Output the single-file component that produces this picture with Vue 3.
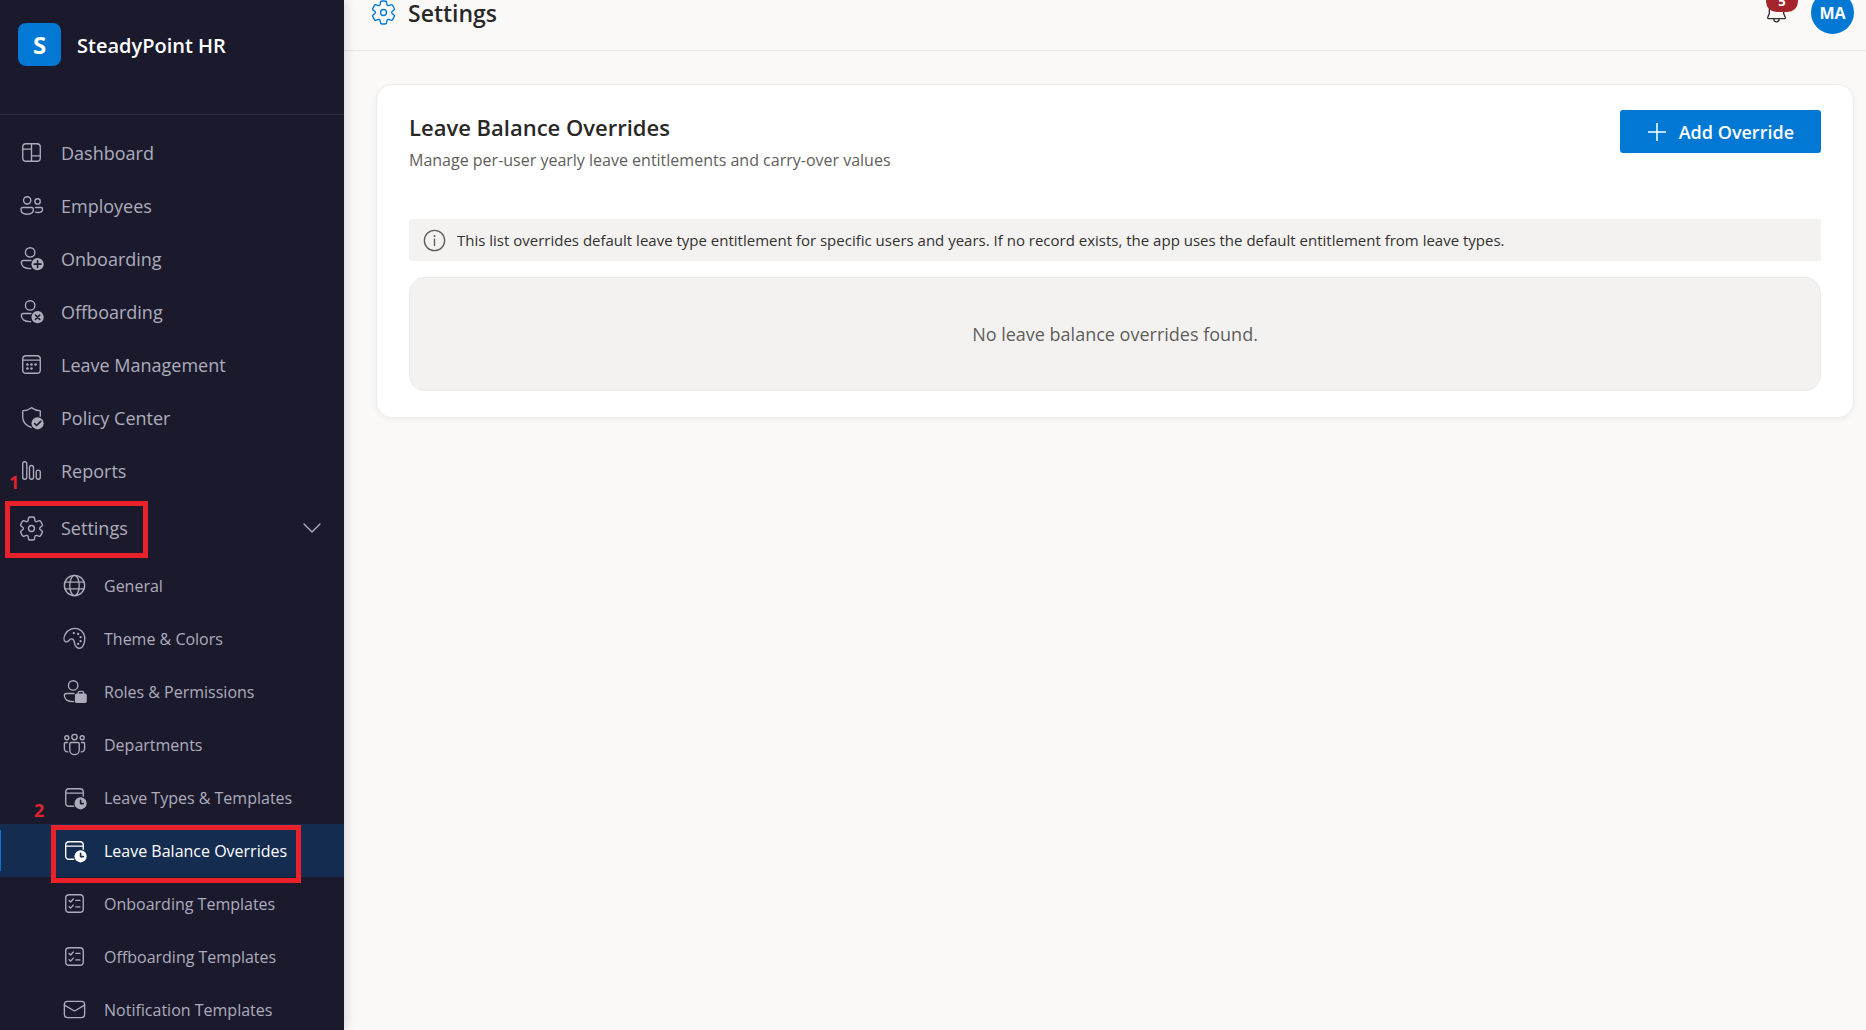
<script setup>
import { ref } from 'vue'

const settingsOpen = ref(true)
const unread = ref(5)
const overrides = ref([])

const mainItems = [
  { label: 'Dashboard', icon: 'board' },
  { label: 'Employees', icon: 'people' },
  { label: 'Onboarding', icon: 'personAdd' },
  { label: 'Offboarding', icon: 'personRemove' },
  { label: 'Leave Management', icon: 'calendar' },
  { label: 'Policy Center', icon: 'shield' },
  { label: 'Reports', icon: 'bars', step: 1 },
]

const settingsItems = [
  { label: 'General', icon: 'globe' },
  { label: 'Theme & Colors', icon: 'palette' },
  { label: 'Roles & Permissions', icon: 'roles' },
  { label: 'Departments', icon: 'team' },
  { label: 'Leave Types & Templates', icon: 'calendarClock', step: 2 },
  { label: 'Leave Balance Overrides', icon: 'calendarClock', active: true },
  { label: 'Onboarding Templates', icon: 'checklist' },
  { label: 'Offboarding Templates', icon: 'checklist' },
  { label: 'Notification Templates', icon: 'mail' },
]

// class "f" = filled shape, class "k" = cut-out drawn in the row colour
const personBody =
  '<circle cx="9" cy="5.5" r="3.5"/><path d="M9.6 11.5H4a1.5 1.5 0 0 0-1.5 1.5c0 2.9 2.4 4.6 6.9 4.5"/>'
const calendarClock =
  '<path d="M9.4 16.5H6A2.5 2.5 0 0 1 3.5 14V6A2.5 2.5 0 0 1 6 3.5h8A2.5 2.5 0 0 1 16.5 6v3M3.5 6.8h13"/>' +
  '<circle class="f" cx="14.5" cy="14.3" r="4.5"/><path class="k" d="M14.5 12v2.5h2"/>'

const icons = {
  board: '<rect x="3.5" y="3.5" width="13" height="13" rx="2.5"/><path d="M10 3.5v13M3.5 7.5H10M10 12.5h6.5"/>',
  people:
    '<circle cx="6.8" cy="6.2" r="2.7"/><circle cx="14.5" cy="7" r="2"/>' +
    '<path d="M3.5 11.5h6.6a1.3 1.3 0 0 1 1.3 1.3c0 2.2-1.8 3.7-4.6 3.7s-4.6-1.5-4.6-3.7a1.3 1.3 0 0 1 1.3-1.3Z"/>' +
    '<path d="M13 11.5h4a1.2 1.2 0 0 1 1.2 1.2c0 1.5-1.4 2.5-3.4 2.5-.7 0-1.4-.1-1.9-.4"/>',
  personAdd: personBody + '<circle class="f" cx="14.5" cy="14.2" r="4.5"/><path class="k" d="M14.5 11.7v5M12 14.2h5"/>',
  personRemove:
    personBody + '<circle class="f" cx="14.5" cy="14.2" r="4.5"/><path class="k" d="m12.9 12.6 3.2 3.2M16.1 12.6l-3.2 3.2"/>',
  calendar:
    '<rect x="3.5" y="3.5" width="13" height="13" rx="2.5"/><path d="M3.5 6.8h13"/>' +
    '<g class="f"><circle cx="7" cy="10" r=".95"/><circle cx="10" cy="10" r=".95"/><circle cx="13" cy="10" r=".95"/>' +
    '<circle cx="7" cy="13" r=".95"/><circle cx="10" cy="13" r=".95"/></g>',
  shield:
    '<path d="M16.5 9V5.4a.5.5 0 0 0-.5-.5c-2 0-3.9-.7-5.7-2a.5.5 0 0 0-.6 0C7.9 4.2 6 4.9 4 4.9a.5.5 0 0 0-.5.5v4.3c0 3.5 2.2 6.1 6.2 7.7"/>' +
    '<circle class="f" cx="14.5" cy="14.3" r="4.5"/><path class="k" d="m12.4 14.5 1.4 1.4 3-3"/>',
  bars:
    '<rect x="3.5" y="3.5" width="3" height="13" rx="1.5"/><rect x="8.5" y="6.3" width="3" height="10.2" rx="1.5"/>' +
    '<rect x="13.5" y="9.7" width="3" height="6.8" rx="1.5"/>',
  gear:
    '<path d="M1.91 7.38A8.5 8.5 0 0 1 3.7 4.3a.5.5 0 0 1 .54-.13l1.92.68a1 1 0 0 0 1.32-.76l.36-2a.5.5 0 0 1 .4-.4 8.53 8.53 0 0 1 3.55 0c.2.04.35.2.38.4l.37 2a1 1 0 0 0 1.32.76l1.92-.68a.5.5 0 0 1 .54.13 8.5 8.5 0 0 1 1.78 3.08c.06.2 0 .4-.15.54l-1.56 1.32a1 1 0 0 0 0 1.52l1.56 1.32a.5.5 0 0 1 .15.54 8.5 8.5 0 0 1-1.78 3.08.5.5 0 0 1-.54.13l-1.92-.68a1 1 0 0 0-1.32.76l-.37 2a.5.5 0 0 1-.38.4 8.53 8.53 0 0 1-3.56 0 .5.5 0 0 1-.39-.4l-.36-2a1 1 0 0 0-1.32-.76l-1.92.68a.5.5 0 0 1-.54-.13 8.5 8.5 0 0 1-1.78-3.08.5.5 0 0 1 .15-.54l1.56-1.32a1 1 0 0 0 0-1.52L2.06 7.92a.5.5 0 0 1-.15-.54Z"/>' +
    '<circle cx="10" cy="10" r="2.2"/>',
  globe: '<circle cx="10" cy="10" r="7.5"/><ellipse cx="10" cy="10" rx="3.5" ry="7.5"/><path d="M3 7.5h14M3 12.5h14"/>',
  palette:
    '<path d="M3.2 12.3C1.7 11.4 2.2 8.6 3.2 6.7 5.2 3.2 9.1 1.7 12.7 2.9c3.7 1.3 5.6 5.1 4.8 9-.7 3.5-2.2 5.6-4.3 5.3-2.3-.3-2.9-1.8-3.2-3.9-.3-2.2-1.1-3.2-2.5-3-1.7.3-2.3 3-4.3 2Z"/>' +
    '<g class="f"><circle cx="9.5" cy="6" r=".85"/><circle cx="12.7" cy="6.6" r=".85"/><circle cx="14.5" cy="9" r=".85"/>' +
    '<circle cx="14.5" cy="12" r=".85"/><circle cx="12.7" cy="14" r=".85"/></g>',
  roles:
    personBody +
    '<rect class="f" x="10.3" y="11.5" width="8.8" height="7" rx="1.3"/><path d="M12.7 11.5v-.6a1 1 0 0 1 1-1h2a1 1 0 0 1 1 1v.6"/>',
  team:
    '<circle cx="10" cy="4.5" r="2"/><circle cx="4.3" cy="5" r="1.5"/><circle cx="15.7" cy="5" r="1.5"/>' +
    '<path d="M7.5 8.5h5a1 1 0 0 1 1 1V14a3.5 3.5 0 0 1-7 0V9.5a1 1 0 0 1 1-1ZM4.8 8.5H3.5a1 1 0 0 0-1 1v3.3a2.7 2.7 0 0 0 2.5 2.7M15.2 8.5h1.3a1 1 0 0 1 1 1v3.3a2.7 2.7 0 0 1-2.5 2.7"/>',
  calendarClock,
  checklist:
    '<rect x="3.5" y="3.5" width="13" height="13" rx="2.5"/><path d="m6 7.8 1.1 1.1 2-2.2M11 7.7h3M6 12.3l1.1 1.1 2-2.2M11 12.5h3"/>',
  mail: '<rect x="2.5" y="4" width="15" height="12" rx="2.3"/><path d="m2.5 6.8 7.5 4.3 7.5-4.3"/>',
  info: '<circle cx="10" cy="10" r="7.5"/><path d="M10 9v4.7"/><circle class="f" cx="10" cy="6.7" r=".7"/>',
  bell:
    '<path d="M10 2.5A5.3 5.3 0 0 0 4.7 7.8v2.9l-1.2 2.9a.6.6 0 0 0 .6.9h11.8a.6.6 0 0 0 .6-.9l-1.2-2.9V7.8A5.3 5.3 0 0 0 10 2.5ZM8 14.5v.4a2 2 0 0 0 4 0v-.4"/>',
}
</script>

<template>
  <div class="layout">
    <aside class="sidebar">
      <div class="brand">
        <span class="logo">S</span>
        <span class="brand-name">SteadyPoint HR</span>
      </div>

      <nav class="nav">
        <ul>
          <li v-for="item in mainItems" :key="item.label">
            <a href="#" class="nav-item">
              <svg class="icon" viewBox="0 0 20 20" v-html="icons[item.icon]"></svg>
              <span>{{ item.label }}</span>
            </a>
            <span v-if="item.step" class="step step-main">{{ item.step }}</span>
          </li>
          <li>
            <button
              type="button"
              class="nav-item nav-toggle"
              :aria-expanded="settingsOpen"
              @click="settingsOpen = !settingsOpen"
            >
              <svg class="icon" viewBox="0 0 20 20" v-html="icons.gear"></svg>
              <span>Settings</span>
              <svg class="chevron" viewBox="0 0 18 10"><path d="m1 1 8 8 8-8" /></svg>
            </button>
            <span class="marker marker-main"></span>
          </li>
        </ul>

        <ul v-if="settingsOpen">
          <li v-for="item in settingsItems" :key="item.label">
            <a href="#" class="nav-item sub" :class="{ active: item.active }">
              <svg class="icon" viewBox="0 0 20 20" v-html="icons[item.icon]"></svg>
              <span>{{ item.label }}</span>
            </a>
            <span v-if="item.step" class="step step-sub">{{ item.step }}</span>
            <span v-if="item.active" class="marker marker-sub"></span>
          </li>
        </ul>
      </nav>
    </aside>

    <div class="page">
      <header class="topbar">
        <svg class="icon topbar-icon" viewBox="0 0 20 20" v-html="icons.gear"></svg>
        <h1>Settings</h1>
        <button type="button" class="bell" aria-label="Notifications">
          <svg class="icon" viewBox="0 0 20 20" v-html="icons.bell"></svg>
          <span class="badge">{{ unread }}</span>
        </button>
        <button type="button" class="avatar">MA</button>
      </header>

      <main class="content">
        <section class="card">
          <div class="card-head">
            <div>
              <h2>Leave Balance Overrides</h2>
              <p class="subtitle">Manage per-user yearly leave entitlements and carry-over values</p>
            </div>
            <button type="button" class="add">
              <svg class="plus" viewBox="0 0 18 18"><path d="M9 0v18M0 9h18" /></svg>
              Add Override
            </button>
          </div>

          <div class="info">
            <svg class="icon info-icon" viewBox="0 0 20 20" v-html="icons.info"></svg>
            <span>
              This list overrides default leave type entitlement for specific users and years. If no record exists, the
              app uses the default entitlement from leave types.
            </span>
          </div>

          <div v-if="overrides.length === 0" class="empty">No leave balance overrides found.</div>
        </section>
      </main>
    </div>
  </div>
</template>

<style>
body {
  background: #faf9f8;
}
</style>

<style scoped>
.layout {
  display: flex;
  height: 100vh;
  overflow: hidden;
  font-family: 'Segoe UI', 'Open Sans', sans-serif;
  color: #292827;
}

ul,
h1,
h2,
p {
  margin: 0;
  padding: 0;
  list-style: none;
}

button {
  border: none;
  background: none;
  padding: 0;
  font-family: inherit;
  cursor: pointer;
}

.icon {
  flex: none;
  width: 27px;
  height: 27px;
  fill: none;
  stroke: currentColor;
  stroke-width: 1;
  stroke-linecap: round;
  stroke-linejoin: round;
}

.icon :deep(.f) {
  fill: currentColor;
  stroke: none;
}

.icon :deep(.k) {
  stroke: #1b1a2d;
  stroke-width: 1.2;
}

/* sidebar */
.sidebar {
  position: relative;
  z-index: 1;
  flex: 0 0 344px;
  background: #1b1a2d;
  color: #aeacbc;
  box-shadow: 2px 0 10px rgba(0, 0, 0, 0.14);
}

.brand {
  display: flex;
  align-items: flex-start;
  gap: 16px;
  padding: 23px 18px 48px;
  border-bottom: 1px solid #302f42;
}

.logo {
  width: 43px;
  border-radius: 8px;
  background: #0078d4;
  color: #fff;
  font-size: 24px;
  font-weight: 700;
  line-height: 43px;
  text-align: center;
}

.brand-name {
  color: #fff;
  font-size: 20px;
  font-weight: 600;
  line-height: 45px;
  height: 43px;
}

.nav {
  padding-top: 11px;
}

.nav li {
  position: relative;
}

.nav-item {
  display: flex;
  align-items: center;
  gap: 16px;
  box-sizing: border-box;
  width: 100%;
  height: 53px;
  padding-left: 18px;
  color: inherit;
  font-size: 18px;
  text-decoration: none;
  white-space: nowrap;
}

.nav-toggle {
  height: 62px;
  padding-right: 23px;
}

.chevron {
  width: 18px;
  height: 10px;
  margin-left: auto;
  fill: none;
  stroke: currentColor;
  stroke-width: 1.4;
  stroke-linecap: round;
  stroke-linejoin: round;
}

.sub {
  padding-left: 61px;
  font-size: 16px;
}

.active {
  background: #142c50;
  color: #fff;
}

.active::before {
  content: '';
  position: absolute;
  left: 0;
  top: 6px;
  bottom: 6px;
  width: 1px;
  background: #0078d4;
}

.active .icon :deep(.k) {
  stroke: #142c50;
}

/* tutorial callouts over the menu */
.step {
  position: absolute;
  color: #dc2430;
  font-size: 18px;
  font-weight: 700;
  line-height: 20px;
}

.step-main {
  left: 9px;
  bottom: 5px;
}

.step-sub {
  left: 34px;
  bottom: 4px;
}

.marker {
  position: absolute;
  border: 5px solid #e8212b;
  pointer-events: none;
}

.marker-main {
  left: 5px;
  right: 196px;
  top: 4px;
  bottom: 1px;
}

.marker-sub {
  z-index: 1;
  left: 51px;
  right: 43px;
  top: 1px;
  bottom: -6px;
}

/* top bar */
.page {
  flex: 1;
  min-width: 0;
}

.topbar {
  display: flex;
  align-items: center;
  height: 25px;
  padding: 0 12px 25px 26px;
  border-bottom: 1px solid #e9e8e6;
}

.topbar-icon {
  color: #0078d4;
}

h1 {
  margin-left: 11px;
  font-size: 23px;
  font-weight: 600;
  line-height: 26px;
}

.bell {
  position: relative;
  display: flex;
  margin-left: auto;
  margin-right: 21px;
  color: #323130;
}

.badge {
  position: absolute;
  left: 3px;
  bottom: 14px;
  width: 32px;
  border-radius: 11px;
  background: #a4262c;
  color: #fff;
  font-size: 13px;
  font-weight: 700;
  line-height: 21px;
  text-align: center;
}

.avatar {
  flex: none;
  width: 43px;
  height: 43px;
  border-radius: 50%;
  background: #0078d4;
  color: #fff;
  font-size: 16px;
  font-weight: 700;
}

/* content */
.content {
  padding: 33px 12px 32px 32px;
}

.card {
  padding: 25px 32px 26px;
  border: 1px solid #efedeb;
  border-radius: 16px;
  background: #fff;
  box-shadow: 0 2px 6px rgba(0, 0, 0, 0.05);
}

.card-head {
  display: flex;
  align-items: flex-start;
  justify-content: space-between;
  gap: 24px;
  margin-bottom: 43px;
}

h2 {
  font-size: 22px;
  font-weight: 600;
  line-height: 35px;
}

.subtitle {
  color: #605e5c;
  font-size: 16px;
  line-height: 31px;
}

.add {
  display: flex;
  flex: none;
  align-items: center;
  gap: 13px;
  height: 43px;
  padding: 0 27px 0 28px;
  border-radius: 3px;
  background: #0078d4;
  color: #fff;
  font-size: 18px;
  font-weight: 600;
}

.plus {
  width: 18px;
  height: 18px;
  stroke: currentColor;
  stroke-width: 1.5;
}

.info {
  display: flex;
  align-items: center;
  gap: 9px;
  min-height: 42px;
  margin-bottom: 16px;
  padding: 0 12px;
  border-radius: 2px;
  background: #f3f2f1;
  color: #323130;
  font-size: 15px;
}

.info-icon {
  color: #605e5c;
}

.empty {
  padding: 41px 24px 40px;
  border: 1px solid #eceae8;
  border-radius: 16px;
  background: #f3f2f1;
  color: #605e5c;
  font-size: 18px;
  line-height: 31px;
  text-align: center;
}
</style>
